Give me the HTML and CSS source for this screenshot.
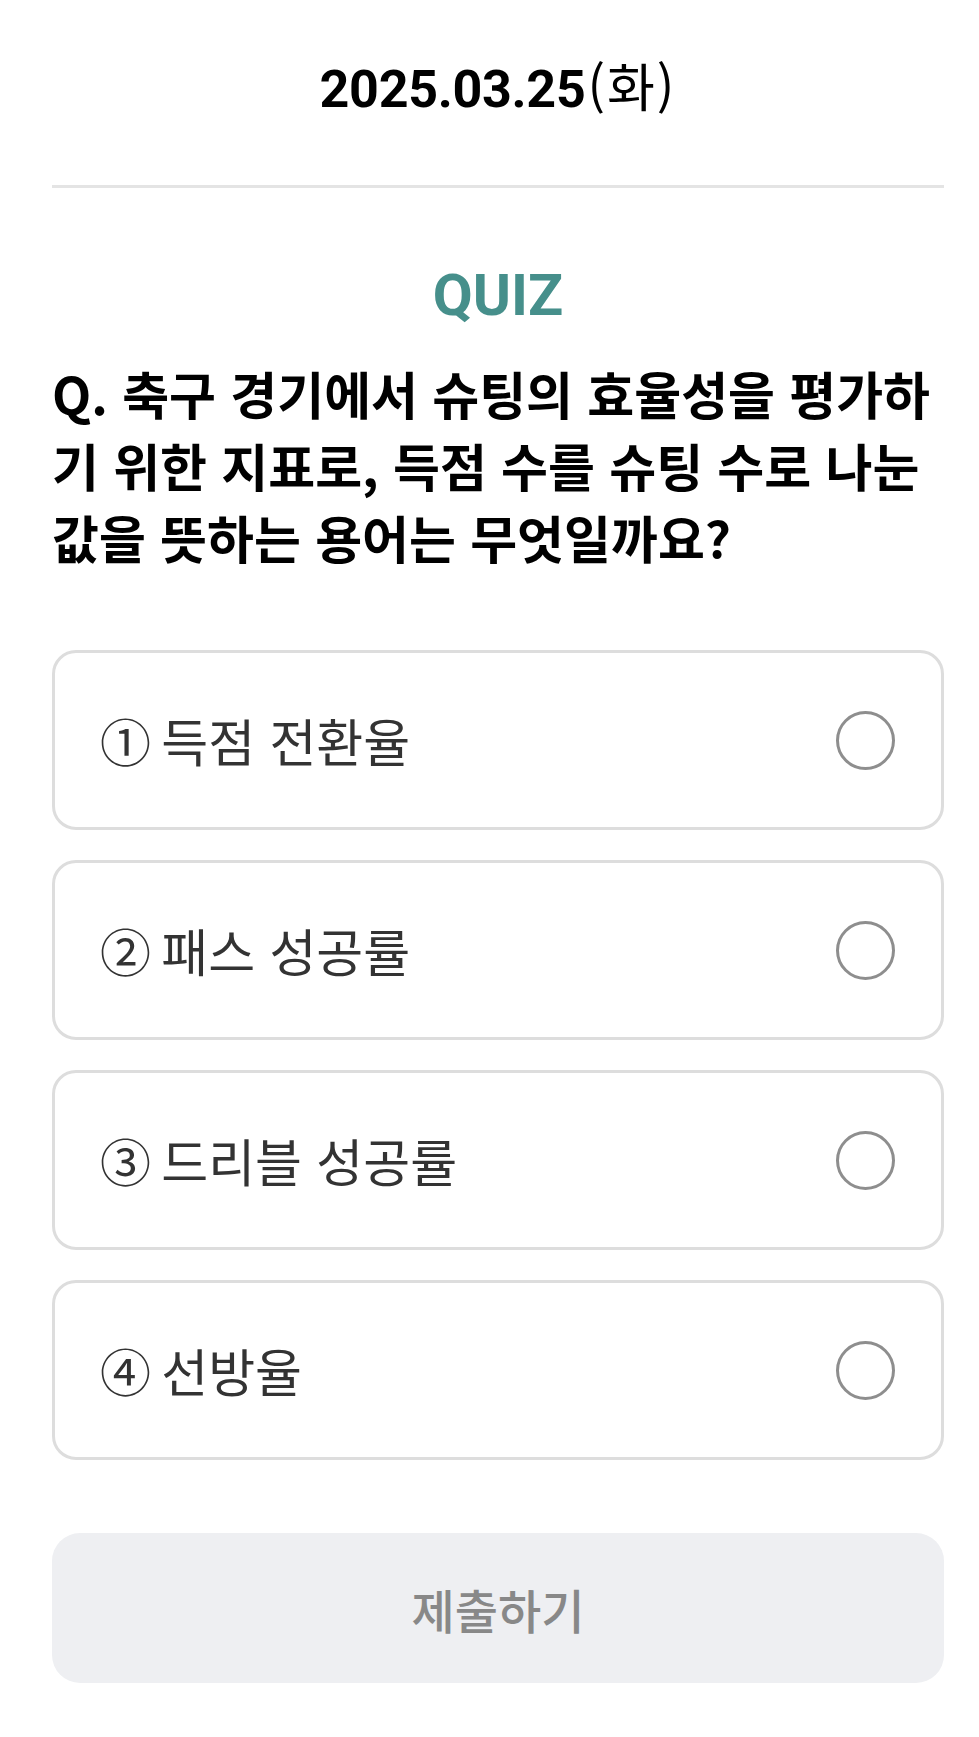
FILE: index.html
```html
<!DOCTYPE html>
<html lang="ko">
<head>
<meta charset="utf-8">
<title>Quiz</title>
<link rel="stylesheet" href="styles.css">
</head>
<body>
<main class="page">
  <header class="date"><span class="date-num">2025.03.25</span><span class="date-day">(화)</span></header>
  <hr class="divider">
  <section class="quiz">
    <h1 class="quiz-title">QUIZ</h1>
    <p class="question">Q. 축구 경기에서 슈팅의 효율성을 평가하기 위한 지표로, 득점 수를 슈팅 수로 나눈 값을 뜻하는 용어는 무엇일까요?</p>
    <ul class="options">
      <li class="option"><span class="option-text"><span class="num">① </span>득점 전환율</span><span class="radio"></span></li>
      <li class="option"><span class="option-text"><span class="num">② </span>패스 성공률</span><span class="radio"></span></li>
      <li class="option"><span class="option-text"><span class="num">③ </span>드리블 성공률</span><span class="radio"></span></li>
      <li class="option"><span class="option-text"><span class="num">④ </span>선방율</span><span class="radio"></span></li>
    </ul>
    <button class="submit" type="button">제출하기</button>
  </section>
</main>
</body>
</html>
```
FILE: styles.css
```css
* { box-sizing: border-box; }
html, body { margin: 0; padding: 0; background: #ffffff; }
body { font-family: "Roboto", "Noto Sans CJK KR", sans-serif; color: #000; }

.page {
  padding: 54px 35px 0 52px;
  display: flex;
  flex-direction: column;
}

.date {
  text-align: center;
  font-size: 52px;
  line-height: 62px;
  height: 62px;
}
.date-num { font-weight: 700; letter-spacing: -0.3px; }
.date-day {
  font-family: "Noto Sans CJK KR", sans-serif;
  font-weight: 400;
  margin-left: 2px;
  letter-spacing: 2px;
}

.divider {
  border: 0;
  height: 3px;
  background: #e4e4e4;
  margin: 69px 0 0 0;
}

.quiz { display: flex; flex-direction: column; }

.quiz-title {
  margin: 72px 0 0 0;
  text-align: center;
  font-family: "Roboto", sans-serif;
  font-weight: 700;
  font-size: 58px;
  line-height: 70px;
  color: #468f8b;
}

.question {
  margin: 27px 0 0 0;
  font-family: "Noto Sans CJK KR", sans-serif;
  font-weight: 700;
  font-size: 51px;
  line-height: 72px;
  color: #000;
}

.options {
  list-style: none;
  margin: 77px 0 0 0;
  padding: 0;
  display: flex;
  flex-direction: column;
  gap: 30px;
}

.option {
  height: 180px;
  border: 3px solid #dddddd;
  border-radius: 24px;
  display: flex;
  align-items: center;
  justify-content: space-between;
  padding: 0 46px 0 45px;
}

.option-text {
  font-family: "Noto Sans CJK KR", sans-serif;
  font-size: 51px;
  font-weight: 400;
  color: #333333;
}

.num { word-spacing: -4px; }

.radio {
  width: 59px;
  height: 59px;
  border: 3px solid #8e8e8e;
  border-radius: 50%;
  flex: none;
}

.submit {
  margin-top: 73px;
  height: 150px;
  border: 0;
  border-radius: 28px;
  background: #eeeff2;
  font-family: "Noto Sans CJK KR", sans-serif;
  font-size: 47px;
  font-weight: 500;
  color: #888888;
  padding: 0;
}
```
